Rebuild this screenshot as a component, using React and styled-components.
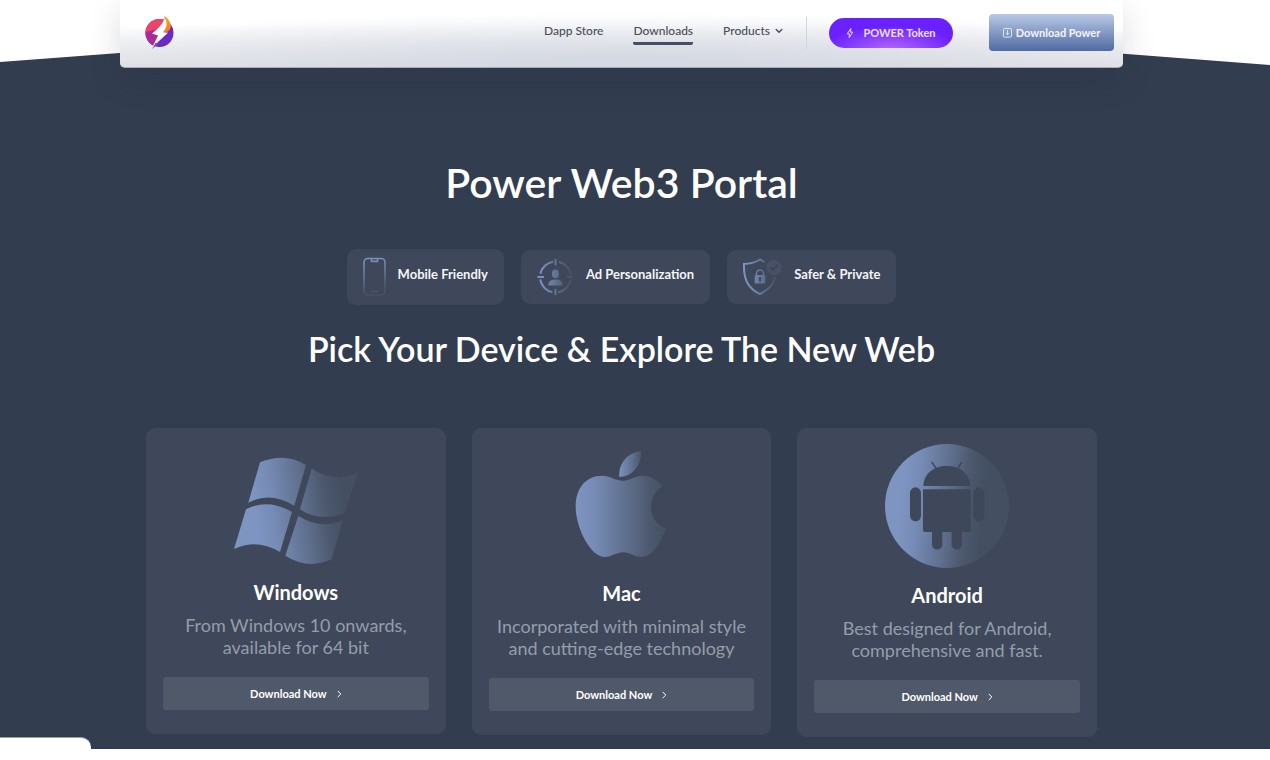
import styled, { createGlobalStyle } from "styled-components";

const features = [
  { name: "Mobile Friendly", icon: PhoneIcon },
  { name: "Ad Personalization", icon: TargetIcon },
  { name: "Safer & Private", icon: ShieldIcon },
];

const devices = [
  {
    name: "Windows",
    lines: ["From Windows 10 onwards,", "available for 64 bit"],
    logo: WindowsLogo,
  },
  {
    name: "Mac",
    lines: ["Incorporated with minimal style", "and cutting-edge technology"],
    logo: AppleLogo,
  },
  {
    name: "Android",
    lines: ["Best designed for Android,", "comprehensive and fast."],
    logo: AndroidLogo,
  },
];

const App = () => {
  return (
    <Page>
      <GlobalStyle />
      <Header>
        <a href="#home" aria-label="Power home">
          <PowerLogo />
        </a>
        <Nav>
          <NavLink href="#store">Dapp Store</NavLink>
          <NavLink href="#downloads" $active>
            Downloads
          </NavLink>
          <NavLink href="#products">
            Products
            <svg width="8" height="6" viewBox="0 0 8 6" fill="none" stroke="currentColor" strokeWidth="1.4" strokeLinecap="round">
              <path d="M1.2 1.5 4 4.2 6.8 1.5" />
            </svg>
          </NavLink>
        </Nav>
        <Divider />
        <TokenButton type="button">
          <svg width="8" height="12" viewBox="0 0 8 12" fill="none" stroke="currentColor" strokeLinejoin="round">
            <path d="M4.8 1.5 1.2 6.8H3.4L3.2 10.5 6.8 5.2H4.6Z" />
          </svg>
          POWER Token
        </TokenButton>
        <DownloadButton type="button">
          <svg width="9" height="10" viewBox="0 0 9 10" fill="none" stroke="currentColor" strokeWidth=".8">
            <rect x=".5" y=".5" width="8" height="8.6" rx="1" />
            <path d="M4.5 2V6.6M2.6 5 4.5 6.8 6.4 5" />
          </svg>
          Download Power
        </DownloadButton>
      </Header>

      <Main>
        <h1>Power Web3 Portal</h1>
        <Features>
          {features.map(({ name, icon: Icon }) => (
            <Feature key={name}>
              <Icon />
              <span>{name}</span>
            </Feature>
          ))}
        </Features>
        <h2>Pick Your Device & Explore The New Web</h2>
        <Cards>
          {devices.map(({ name, lines, logo: Logo }) => (
            <Card key={name}>
              <Logo />
              <h3>{name}</h3>
              <p>
                {lines[0]}
                <br />
                {lines[1]}
              </p>
              <button type="button">
                Download Now
                <svg width="5" height="8" viewBox="0 0 5 8" fill="none" stroke="currentColor" strokeLinecap="round">
                  <path d="M1 1.2 3.8 4 1 6.8" />
                </svg>
              </button>
            </Card>
          ))}
        </Cards>
      </Main>
      <StatusBubble />
    </Page>
  );
};

export default App;

function Fade({ id, x1 = 0, y1 = 0, x2 = 124, y2 = 0 }) {
  return (
    <linearGradient id={id} gradientUnits="userSpaceOnUse" x1={x1} y1={y1} x2={x2} y2={y2}>
      <stop offset="0" stopColor="#7e95c2" />
      <stop offset=".2" stopColor="#768bb5" />
      <stop offset=".55" stopColor="#5f6f8d" />
      <stop offset=".8" stopColor="#4b586d" />
      <stop offset="1" stopColor="#444f62" />
    </linearGradient>
  );
}

function PowerLogo() {
  return (
    <svg width="30" height="34" viewBox="0 0 30 34">
      <defs>
        <clipPath id="disc">
          <circle cx="14.5" cy="17" r="14" />
        </clipPath>
        <linearGradient id="flame" x1="0" y1="0" x2="0" y2="1">
          <stop offset="0" stopColor="#f5a52b" />
          <stop offset="1" stopColor="#f97a0c" />
        </linearGradient>
      </defs>
      <g clipPath="url(#disc)">
        <rect width="30" height="34" fill="#6a2bc4" />
        <path d="M0 12 18 8 12 24 8 34H0Z" fill="#a82b9c" />
        <path d="M0 0H20L19 6C15 12 8 15 0 16Z" fill="#ee4468" />
      </g>
      <path d="M19.6 0C24 3 26.5 8 25.5 12 24.5 15 22 16.5 18 16.5Z" fill="url(#flame)" />
      <path d="M19 3.5C18 8 12 13.5 7 17.5L13 19.5 7.5 31 23 16.8 18 16.2C21.5 12.5 22.5 8 20.5 3Z" fill="#fff" />
      <path d="M7 33 10.5 27 14 27Z" fill="#7848cd" />
    </svg>
  );
}

function PhoneIcon() {
  return (
    <svg width="23" height="40" viewBox="0 0 23 40" fill="none" stroke="url(#phone)">
      <defs>
        <Fade id="phone" x2={10} y2={40} />
      </defs>
      <rect x="1" y="1.5" width="21" height="36.5" rx="4" strokeWidth="1.6" />
      <path d="M8.5 2V4.4H14.5V2" strokeWidth="1.6" />
      <path d="M8.5 34.5H14.5" strokeWidth="1.6" strokeLinecap="round" />
    </svg>
  );
}

function TargetIcon() {
  return (
    <svg width="37" height="38" viewBox="0 0 37 38" fill="none" stroke="url(#target)">
      <defs>
        <Fade id="target" x2={37} />
      </defs>
      <circle cx="18.5" cy="19" r="15.5" strokeWidth="2" strokeDasharray="18.4 6" strokeDashoffset="-3" />
      <path d="M18.6 1V7.5M18.5 31V37M.5 19H7M30 19H36.5" strokeWidth="2" />
      <g fill="url(#target)" stroke="none">
        <rect x="15" y="11.5" width="7" height="8.5" rx="3.5" />
        <path d="M11.3 27.5C11.3 23.5 14 21.5 18.5 21.5S25.7 23.5 25.7 27.5Z" />
      </g>
    </svg>
  );
}

function ShieldIcon() {
  return (
    <svg width="39" height="38" viewBox="0 0 39 38" fill="none" stroke="url(#shield)">
      <defs>
        <Fade id="shield" x2={38} />
      </defs>
      <path d="M21.5 4 17 1.5C13 4 7 6 1 6 .5 20 4 30 17 36 27 31 31.5 25 32 18.5" strokeWidth="2" />
      <path d="M13.5 18V15.5A3.5 3.5 0 0 1 20.5 15.5V18" strokeWidth="1.5" />
      <rect x="11.7" y="17" width="10.6" height="8.5" rx="1" fill="url(#shield)" stroke="none" />
      <path d="M17 19V23.5" stroke="#3f475a" strokeWidth="2" />
      <circle cx="31" cy="9.5" r="7.8" fill="#465165" stroke="none" />
      <path d="M27.5 9.5 30 12 34.5 7" stroke="#3a4356" strokeWidth="1.8" />
    </svg>
  );
}

function WindowsLogo() {
  return (
    <svg width="124" height="121" viewBox="0 0 124 121" fill="url(#windows)">
      <defs>
        <Fade id="windows" x1={20} y1={60} x2={108} y2={48} />
      </defs>
      <path d="M26 18.3Q51 8 72 21L60.3 61.7Q36 47 14.3 58.7Z" />
      <path d="M77.7 24.7Q99 39 123.7 28.7L111 68.7Q87 79 66 65.3Z" />
      <path d="M12 65.3Q34 54 58 68L46 108Q23 94 0 105Z" />
      <path d="M64.3 72Q88 86 108.7 76L97.7 115.3Q74 126 51.3 111.7Z" />
    </svg>
  );
}

function AppleLogo() {
  return (
    <svg width="124" height="122" viewBox="0 0 124 122" fill="url(#apple)">
      <defs>
        <Fade id="apple" x1={16} x2={110} />
        <Fade id="leaf" x1={56} x2={88} />
      </defs>
      <path d="M64 36.7C57 36.7 51 31.7 43 31.7C27 31.7 16.7 44 16.7 62.7C16.7 83 31 113 46 113C53 113 57 108.3 64.3 108.3C71.5 108.3 75 113 82.7 113C93 113 102 99 107 84.3C98 81 92 73 92 63.3C92 54 96 47 103.3 42.7C99 35.5 91 31.7 83.7 31.7C76 31.7 71 36.7 64 36.7Z" />
      <path d="M60.3 33C59 20 69 8 82 7.3C83 20 74 33 60.3 33Z" fill="url(#leaf)" />
    </svg>
  );
}

function AndroidLogo() {
  return (
    <svg width="124" height="124" viewBox="0 0 124 124">
      <defs>
        <Fade id="android" x1={16} y1={58} x2={98} y2={66} />
      </defs>
      <circle cx="62" cy="62" r="62" fill="url(#android)" />
      <g fill="#3f475a">
        <path d="M38.3 42C39 29 49 22 61.8 22S84.6 29 85.3 42Z" />
        <path d="M38 45.3H85.7V86Q85.7 88 83.7 88H77V101A5.2 5.2 0 0 1 66.7 101V88H57.3V101A5.2 5.2 0 0 1 47 101V88H40Q38 88 38 86Z" />
        <rect x="25" y="43.3" width="11" height="34" rx="5.5" />
        <rect x="88.3" y="43.3" width="11" height="34" rx="5.5" />
      </g>
      <path d="M46.7 18 51.5 25M77 18 72.5 25" stroke="#3f475a" strokeWidth="1.4" />
    </svg>
  );
}

const GlobalStyle = createGlobalStyle`
  * {
    box-sizing: border-box;
  }
  body {
    margin: 0;
    background: #fff;
    font-family: Lato, "Open Sans", sans-serif;
  }
  h1, h2, h3, p {
    margin: 0;
  }
  button {
    border: 0;
    font-family: inherit;
    cursor: pointer;
  }
  svg {
    display: block;
    flex-shrink: 0;
  }
`;

const Page = styled.div`
  position: relative;
  isolation: isolate;
  padding-right: 27px;
  padding-bottom: 11px;

  /* dark backdrop with a roof-shaped top edge */
  &::before {
    content: "";
    position: absolute;
    z-index: -1;
    inset: 0 0 11px;
    background: #323d4f;
    clip-path: polygon(0 62px, 49% 15px, 100% 65px, 100% 100%, 0 100%);
  }
`;

const Header = styled.header`
  display: flex;
  align-items: center;
  margin: 0 120px;
  padding: 14px 9px 16px 25px;
  border-bottom: 1px solid #a9adba;
  border-radius: 0 0 5px 5px;
  background: radial-gradient(ellipse 70% 80% at 50% 100%, #d5d9e2 15%, rgba(213, 217, 226, 0)),
    linear-gradient(#fff 35%, #e4e5e8);
  box-shadow: 0 12px 32px rgba(40, 35, 65, 0.16);
`;

const Nav = styled.nav`
  display: flex;
  gap: 30px;
  margin-left: auto;
`;

const NavLink = styled.a`
  display: flex;
  align-items: center;
  gap: 5px;
  padding: 4px 0;
  border-bottom: 3px solid ${({ $active }) => ($active ? "#454f64" : "transparent")};
  border-radius: 2px;
  color: #4b4e58;
  font-size: 12px;
  font-weight: 500;
  line-height: 14px;
  text-decoration: none;
`;

const Divider = styled.span`
  width: 1px;
  height: 32px;
  margin: 0 22px 0 23px;
  background: #d2d5dc;
`;

const TokenButton = styled.button`
  display: flex;
  align-items: center;
  justify-content: center;
  gap: 9px;
  width: 124px;
  height: 30px;
  padding: 0;
  border-radius: 15px;
  background: radial-gradient(ellipse 55% 85% at 50% 110%, #b56bfa, #6a20ff);
  color: #ece0ff;
  font-size: 11px;
  font-weight: 700;
`;

const DownloadButton = styled.button`
  display: flex;
  align-items: center;
  justify-content: center;
  gap: 4px;
  width: 125px;
  height: 37px;
  margin-left: 36px;
  padding: 0;
  border-radius: 4px;
  background: linear-gradient(#b8c8e6, #506ba3);
  color: #f3f6fc;
  font-size: 11px;
  font-weight: 700;
`;

const Main = styled.main`
  padding: 90px 146px 12px;
  color: #fff;
  text-align: center;

  h1 {
    font-size: 41px;
    font-weight: 600;
    line-height: 50px;
  }
  h2 {
    font-size: 34px;
    font-weight: 600;
    line-height: 42px;
  }
`;

const Features = styled.div`
  display: flex;
  justify-content: center;
  align-items: center;
  gap: 17px;
  margin: 41px 0 23px;
`;

const Feature = styled.div`
  display: flex;
  align-items: center;
  gap: 12px;
  padding: 8px 16px;
  border-radius: 9px;
  background: #3f475a;
  color: #f4f5f7;
  font-size: 13px;
  font-weight: 700;

  span {
    padding-bottom: 6px;
  }
`;

const Cards = styled.div`
  display: grid;
  grid-template-columns: repeat(3, 1fr);
  align-items: start;
  gap: 26px;
  margin-top: 58px;
`;

const Card = styled.article`
  display: flex;
  flex-direction: column;
  align-items: center;
  padding: 16px 17px 24px;
  border-radius: 9px;
  background: #3f475a;

  h3 {
    margin-top: 14px;
    font-size: 20px;
    font-weight: 700;
    line-height: 26px;
  }
  p {
    margin: 9px 0 19px;
    color: #949eaa;
    font-size: 18px;
    line-height: 22px;
    white-space: nowrap;
  }
  button {
    display: flex;
    align-items: center;
    justify-content: center;
    gap: 10px;
    width: 100%;
    height: 33px;
    border-radius: 3px;
    background: #505969;
    color: #fff;
    font-size: 11px;
    font-weight: 700;
  }
`;

const StatusBubble = styled.div`
  position: fixed;
  bottom: 0;
  left: 0;
  width: 91px;
  height: 23px;
  border-top: 1px solid #9a9eab;
  border-top-right-radius: 10px;
  background: #fff;
`;
